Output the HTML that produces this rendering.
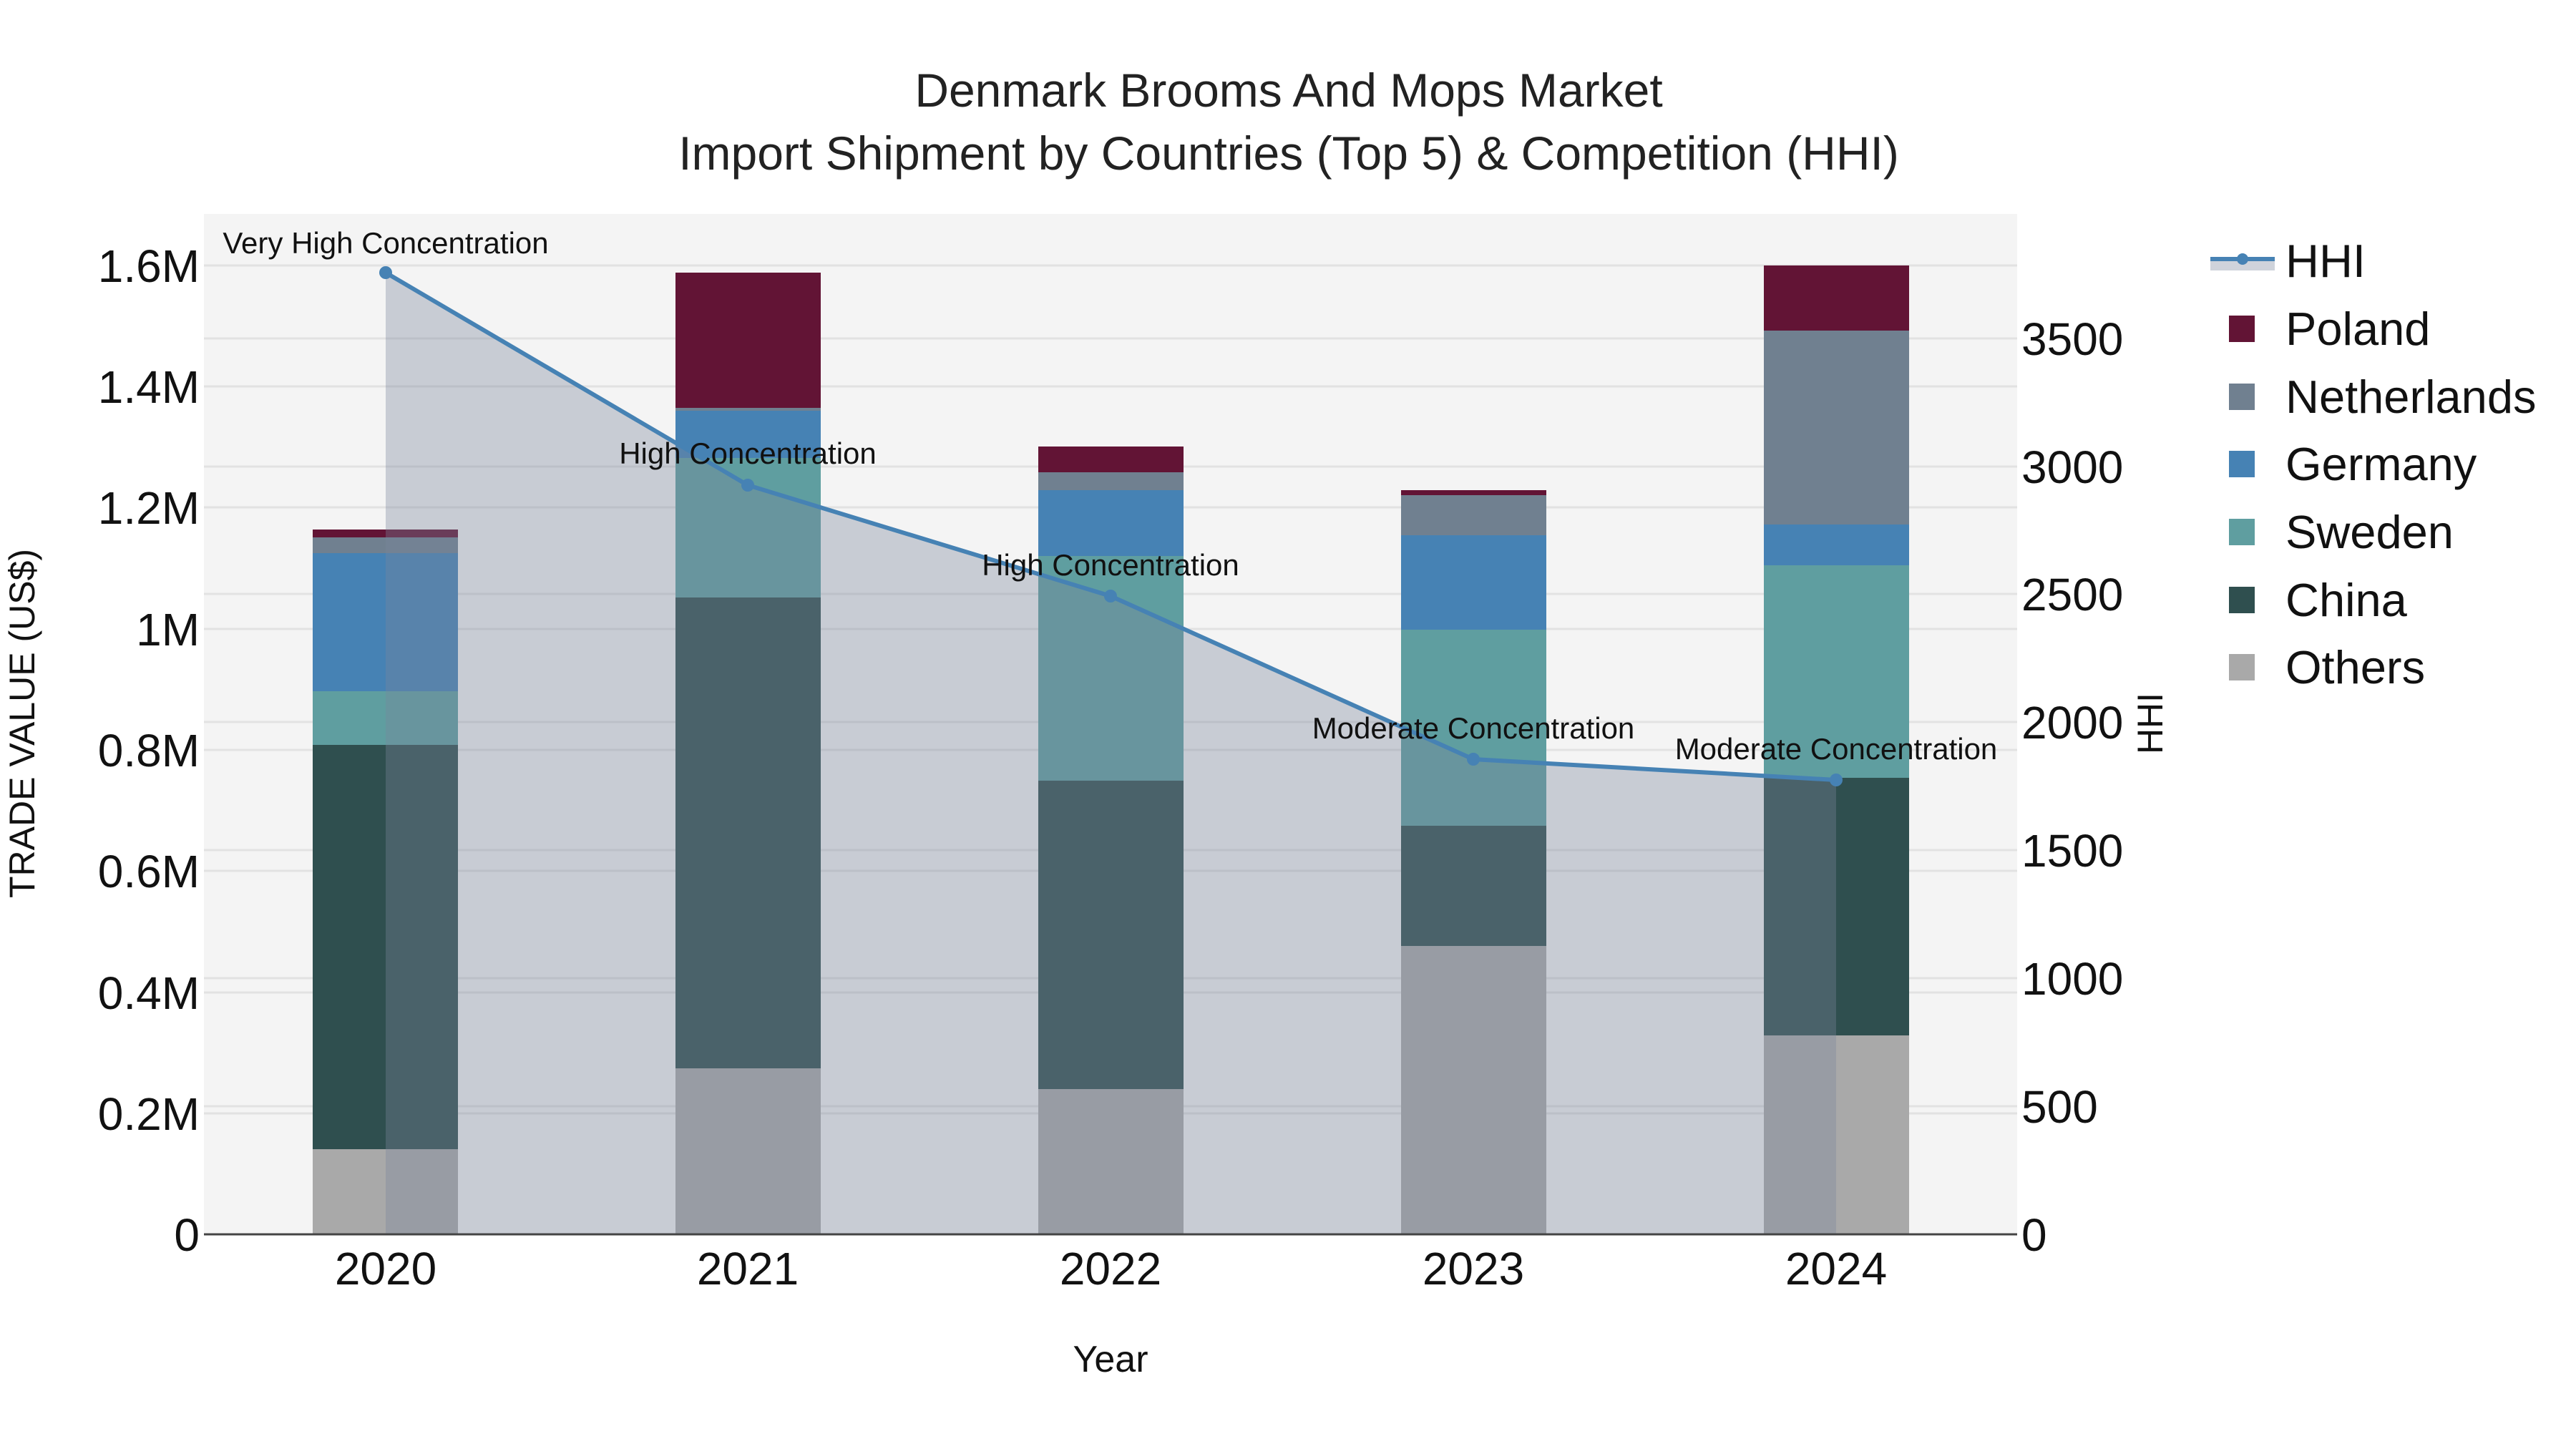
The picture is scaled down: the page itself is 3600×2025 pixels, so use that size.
<!DOCTYPE html>
<html><head><meta charset="utf-8"><style>
html,body{margin:0;padding:0;background:#fff;}
svg{display:block;font-family:"Liberation Sans",sans-serif;}
</style></head><body>
<svg width="3600" height="2025" viewBox="0 0 3600 2025" xmlns="http://www.w3.org/2000/svg">
<rect x="0" y="0" width="3600" height="2025" fill="#fff"/>
<rect x="285" y="299" width="2534" height="1426" fill="#f4f4f4"/>
<g stroke="#e2e2e2" stroke-width="3">
<line x1="285" x2="2819" y1="1556" y2="1556"/><line x1="285" x2="2819" y1="1387" y2="1387"/>
<line x1="285" x2="2819" y1="1217" y2="1217"/><line x1="285" x2="2819" y1="1048" y2="1048"/>
<line x1="285" x2="2819" y1="879" y2="879"/><line x1="285" x2="2819" y1="709" y2="709"/>
<line x1="285" x2="2819" y1="540" y2="540"/><line x1="285" x2="2819" y1="371" y2="371"/>
<line x1="285" x2="2819" y1="1546" y2="1546"/><line x1="285" x2="2819" y1="1367" y2="1367"/>
<line x1="285" x2="2819" y1="1188" y2="1188"/><line x1="285" x2="2819" y1="1009" y2="1009"/>
<line x1="285" x2="2819" y1="830" y2="830"/><line x1="285" x2="2819" y1="652" y2="652"/>
<line x1="285" x2="2819" y1="473" y2="473"/>
</g>
<g>
<rect x="437" y="1606" width="203" height="119" fill="#a9a9a9"/>
<rect x="437" y="1041" width="203" height="565" fill="#2f4f4f"/>
<rect x="437" y="966" width="203" height="75" fill="#5f9ea0"/>
<rect x="437" y="773" width="203" height="193" fill="#4682b4"/>
<rect x="437" y="751" width="203" height="22" fill="#708090"/>
<rect x="437" y="740" width="203" height="11" fill="#621435"/>
</g>
<g>
<rect x="944" y="1493" width="203" height="232" fill="#a9a9a9"/>
<rect x="944" y="835" width="203" height="658" fill="#2f4f4f"/>
<rect x="944" y="640" width="203" height="195" fill="#5f9ea0"/>
<rect x="944" y="574" width="203" height="66" fill="#4682b4"/>
<rect x="944" y="570" width="203" height="4" fill="#708090"/>
<rect x="944" y="381" width="203" height="189" fill="#621435"/>
</g>
<g>
<rect x="1451" y="1522" width="203" height="203" fill="#a9a9a9"/>
<rect x="1451" y="1091" width="203" height="431" fill="#2f4f4f"/>
<rect x="1451" y="777" width="203" height="314" fill="#5f9ea0"/>
<rect x="1451" y="685" width="203" height="92" fill="#4682b4"/>
<rect x="1451" y="660" width="203" height="25" fill="#708090"/>
<rect x="1451" y="624" width="203" height="36" fill="#621435"/>
</g>
<g>
<rect x="1958" y="1322" width="203" height="403" fill="#a9a9a9"/>
<rect x="1958" y="1154" width="203" height="168" fill="#2f4f4f"/>
<rect x="1958" y="880" width="203" height="274" fill="#5f9ea0"/>
<rect x="1958" y="748" width="203" height="132" fill="#4682b4"/>
<rect x="1958" y="692" width="203" height="56" fill="#708090"/>
<rect x="1958" y="685" width="203" height="7" fill="#621435"/>
</g>
<g>
<rect x="2465" y="1447" width="203" height="278" fill="#a9a9a9"/>
<rect x="2465" y="1087" width="203" height="360" fill="#2f4f4f"/>
<rect x="2465" y="790" width="203" height="297" fill="#5f9ea0"/>
<rect x="2465" y="733" width="203" height="57" fill="#4682b4"/>
<rect x="2465" y="462" width="203" height="271" fill="#708090"/>
<rect x="2465" y="371" width="203" height="91" fill="#621435"/>
</g>
<polygon points="539,1725 539,381 1045,678 1552,833 2059,1061 2566,1090 2566,1725" fill="rgb(122,134,156)" fill-opacity="0.36"/>
<line x1="285" x2="2819" y1="1725" y2="1725" stroke="#444" stroke-width="3"/>
<polyline points="539,381 1045,678 1552,833 2059,1061 2566,1090" fill="none" stroke="#4682b4" stroke-width="6"/>
<g fill="#4682b4">
<circle cx="539" cy="381" r="9"/><circle cx="1045" cy="678" r="9"/><circle cx="1552" cy="833" r="9"/><circle cx="2059" cy="1061" r="9"/><circle cx="2566" cy="1090" r="9"/>
</g>
<g font-size="42" fill="#111" text-anchor="middle">
<text x="539" y="354">Very High Concentration</text>
<text x="1045" y="648">High Concentration</text>
<text x="1552" y="804">High Concentration</text>
<text x="2059" y="1032">Moderate Concentration</text>
<text x="2566" y="1061">Moderate Concentration</text>
</g>
<g font-size="64" fill="#111" text-anchor="end">
<text x="279" y="1748">0</text><text x="279" y="1579">0.2M</text><text x="279" y="1410">0.4M</text>
<text x="279" y="1240">0.6M</text><text x="279" y="1071">0.8M</text><text x="279" y="902">1M</text>
<text x="279" y="732">1.2M</text><text x="279" y="563">1.4M</text><text x="279" y="394">1.6M</text>
</g>
<g font-size="64" fill="#111">
<text x="2825" y="1748">0</text><text x="2825" y="1569">500</text><text x="2825" y="1390">1000</text>
<text x="2825" y="1211">1500</text><text x="2825" y="1032">2000</text><text x="2825" y="853">2500</text>
<text x="2825" y="675">3000</text><text x="2825" y="496">3500</text>
</g>
<g font-size="64" fill="#111" text-anchor="middle">
<text x="539" y="1795">2020</text><text x="1045" y="1795">2021</text><text x="1552" y="1795">2022</text>
<text x="2059" y="1795">2023</text><text x="2566" y="1795">2024</text>
</g>
<text x="1552" y="1917" font-size="52" fill="#111" text-anchor="middle">Year</text>
<text transform="translate(48,1011) rotate(-90)" font-size="50" fill="#111" text-anchor="middle">TRADE VALUE (US$)</text>
<text transform="translate(3022,1011) rotate(-90)" font-size="50" fill="#111" text-anchor="middle">HHI</text>
<g font-size="66" fill="#222" text-anchor="middle">
<text x="1801" y="149">Denmark Brooms And Mops Market</text>
<text x="1801" y="237">Import Shipment by Countries (Top 5) &amp; Competition (HHI)</text>
</g>
<rect x="3089" y="365" width="90" height="13" fill="rgb(122,134,156)" fill-opacity="0.36"/>
<line x1="3089" x2="3179" y1="362" y2="362" stroke="#4682b4" stroke-width="6"/>
<circle cx="3134" cy="362" r="8" fill="#4682b4"/>
<rect x="3115" y="441" width="36" height="37" fill="#621435"/>
<rect x="3115" y="536" width="36" height="37" fill="#708090"/>
<rect x="3115" y="630" width="36" height="37" fill="#4682b4"/>
<rect x="3115" y="725" width="36" height="37" fill="#5f9ea0"/>
<rect x="3115" y="820" width="36" height="37" fill="#2f4f4f"/>
<rect x="3115" y="914" width="36" height="37" fill="#a9a9a9"/>
<g font-size="65" fill="#111">
<text x="3194" y="387">HHI</text>
<text x="3194" y="482">Poland</text>
<text x="3194" y="577">Netherlands</text>
<text x="3194" y="671">Germany</text>
<text x="3194" y="766">Sweden</text>
<text x="3194" y="861">China</text>
<text x="3194" y="955">Others</text>
</g>
</svg>
</body></html>
